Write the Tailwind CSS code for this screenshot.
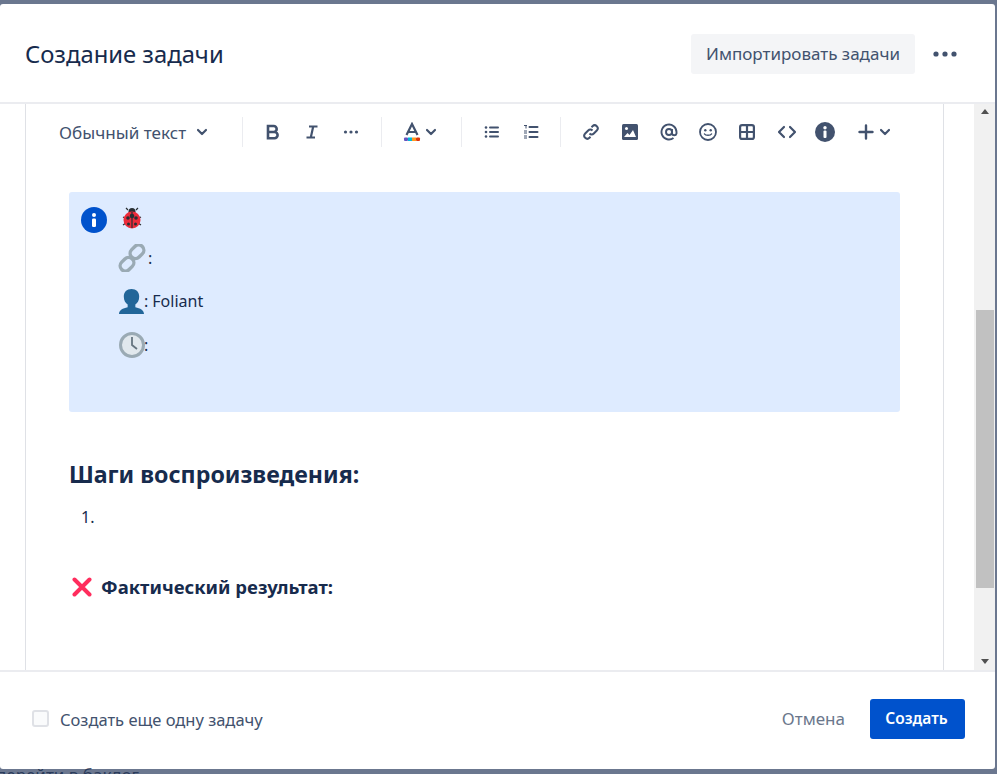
<!DOCTYPE html>
<html lang="ru">
<head>
  <meta charset="UTF-8"/>
  <meta name="viewport" content="width=device-width,initial-scale=1"/>
  <title>Создание задачи</title>
  <script src="https://cdn.jsdelivr.net/npm/@tailwindcss/browser@4"></script>
</head>
<body class="h-[774px] w-[997px] overflow-hidden bg-[#6b778f] font-['Noto_Sans','Open_Sans',sans-serif] text-[#172b4d]">

  <!-- Modal -->
  <div class="mt-[4px] flex h-[765px] w-[995px] flex-col overflow-hidden rounded-[3px] bg-white">

    <!-- Header -->
    <header class="flex h-[100px] shrink-0 items-center justify-between border-b-2 border-[#ebecf0] pl-[25px] pr-[37px] pt-[2px]">
      <h1 class="mt-[2px] text-[23.8px] font-normal leading-none">Создание задачи</h1>
      <div class="flex items-center gap-[17px]">
        <button class="flex h-[40px] w-[224px] items-center justify-center rounded-[3px] bg-[#f4f5f7] text-[17px] text-[#42526e]">Импортировать задачи</button>
        <svg width="26" height="8" viewBox="0 0 26 8" fill="#42526e"><circle cx="4" cy="4" r="2.6"/><circle cx="13" cy="4" r="2.6"/><circle cx="22" cy="4" r="2.6"/></svg>
      </div>
    </header>

    <!-- Body -->
    <div class="flex min-h-0 flex-1">
      <div class="ml-[25px] w-[919px] shrink-0 overflow-hidden border-x border-[#dfe1e6]">

        <!-- Toolbar -->
        <div class="flex h-[56px] items-center text-[#42526e]">
          <div class="flex w-[216px] items-center pl-[33px] text-[17.1px]">
            <span class="mt-[1px]">Обычный текст</span>
            <svg class="ml-[9px]" width="14" height="14" viewBox="0 0 14 14" fill="none" stroke="#42526e" stroke-width="2.2" stroke-linecap="round" stroke-linejoin="round"><path d="M3 5l4 4 4-4"/></svg>
          </div>
          <div class="h-[30px] w-px bg-[#ebecf0]"></div>
          <div class="flex w-[138px] justify-center">
            <div class="flex h-[24px] w-[39px] items-center justify-center">
              <svg width="16" height="16" viewBox="0 0 16 16" fill="none" stroke="#42526e" stroke-width="2.6"><path d="M3 2h5.700a3 3 0 0 1 0 6H3M3 8h6.500a3 3 0 0 1 0 6.200H3zM3 .8v14.500"/></svg>
            </div>
            <div class="flex h-[24px] w-[39px] items-center justify-center">
              <svg width="16" height="16" viewBox="0 0 16 16" fill="none" stroke="#42526e" stroke-width="2.200"><path d="M5 2.500h8.500M2.500 13.500H11M9.200 2.500L6.800 13.500"/></svg>
            </div>
            <div class="flex h-[24px] w-[39px] items-center justify-center">
              <svg width="16" height="6" viewBox="0 0 16 6" fill="#42526e"><circle cx="2.500" cy="3" r="1.600"/><circle cx="8" cy="3" r="1.600"/><circle cx="13.500" cy="3" r="1.600"/></svg>
            </div>
          </div>
          <div class="h-[30px] w-px bg-[#ebecf0]"></div>
          <div class="flex w-[79px] items-center pl-[21px]">
            <svg width="18" height="20" viewBox="0 0 18 20"><path d="M3.500 13L9 2l5.500 11M5.500 10h7" fill="none" stroke="#42526e" stroke-width="2.200"/><rect x="1" y="15.500" width="4" height="3.500" rx="1" fill="#6554c0"/><rect x="5" y="15.500" width="4" height="3.500" fill="#00b8d9"/><rect x="9" y="15.500" width="4" height="3.500" fill="#ff991f"/><rect x="13" y="15.500" width="4" height="3.500" rx="1" fill="#de350b"/></svg>
            <svg class="ml-[3px]" width="14" height="14" viewBox="0 0 14 14" fill="none" stroke="#42526e" stroke-width="2.200" stroke-linecap="round" stroke-linejoin="round"><path d="M3 5l4 4 4-4"/></svg>
          </div>
          <div class="h-[30px] w-px bg-[#ebecf0]"></div>
          <div class="flex w-[98px] items-center pl-[10px]">
            <div class="flex h-[24px] w-[39px] items-center justify-center">
              <svg width="16" height="14" viewBox="0 0 16 14" fill="#42526e"><circle cx="2" cy="2.500" r="1.300"/><circle cx="2" cy="7" r="1.300"/><circle cx="2" cy="11.500" r="1.300"/><rect x="5" y="1.500" width="10" height="2" rx="1"/><rect x="5" y="6" width="10" height="2" rx="1"/><rect x="5" y="10.500" width="10" height="2" rx="1"/></svg>
            </div>
            <div class="flex h-[24px] w-[39px] items-center justify-center">
              <svg width="16" height="16" viewBox="0 0 16 16" fill="#42526e"><rect x="1" y="1" width="3" height="1" /><rect x="2.500" y="1" width="1" height="3.500"/><rect x="1" y="6.500" width="3" height="1"/><rect x="1" y="8.500" width="3" height="1"/><rect x="1" y="11.500" width="3" height="1"/><rect x="1" y="13.500" width="3" height="1"/><rect x="5.500" y="2" width="10" height="2" rx="1"/><rect x="5.500" y="7" width="10" height="2" rx="1"/><rect x="5.500" y="12" width="10" height="2" rx="1"/></svg>
            </div>
          </div>
          <div class="h-[30px] w-px bg-[#ebecf0]"></div>
          <div class="flex items-center pl-[10px]">
            <div class="flex h-[24px] w-[39px] items-center justify-center">
              <svg width="18" height="18" viewBox="0 0 18 18" fill="none" stroke="#42526e" stroke-width="2"><path d="M7.500 10.500a3 3 0 0 0 4.300 0l3-3a3 3 0 0 0-4.300-4.300l-1 1"/><path d="M10.500 7.500a3 3 0 0 0-4.300 0l-3 3a3 3 0 0 0 4.300 4.300l1-1"/></svg>
            </div>
            <div class="flex h-[24px] w-[39px] items-center justify-center">
              <svg width="16" height="16" viewBox="0 0 16 16"><rect width="16" height="16" rx="1.500" fill="#42526e"/><circle cx="4.500" cy="4.500" r="1.500" fill="#fff"/><path d="M2 13l3.500-4 2 2 3.500-5 3 7z" fill="#fff"/></svg>
            </div>
            <div class="flex h-[24px] w-[39px] items-center justify-center">
              <svg width="18" height="18" viewBox="0 0 18 18" fill="none" stroke="#42526e" stroke-width="1.900"><circle cx="9" cy="9" r="3"/><path d="M12 6v4.500a2.300 2.300 0 0 0 4.500 0V9a7.500 7.500 0 1 0-3 6"/></svg>
            </div>
            <div class="flex h-[24px] w-[39px] items-center justify-center">
              <svg width="18" height="18" viewBox="0 0 18 18"><circle cx="9" cy="9" r="8" fill="none" stroke="#42526e" stroke-width="1.800"/><circle cx="6.300" cy="7.300" r="1.200" fill="#42526e"/><circle cx="11.700" cy="7.300" r="1.200" fill="#42526e"/><path d="M5.500 11c1 1.800 6 1.800 7 0" fill="none" stroke="#42526e" stroke-width="1.500" stroke-linecap="round"/></svg>
            </div>
            <div class="flex h-[24px] w-[39px] items-center justify-center">
              <svg width="16" height="16" viewBox="0 0 16 16" fill="none" stroke="#42526e" stroke-width="2.200"><rect x="1.100" y="1.100" width="13.800" height="13.800" rx="2"/><path d="M8 1v14M1 8h14"/></svg>
            </div>
            <div class="flex h-[24px] w-[39px] items-center justify-center pl-[2px]">
              <svg width="20" height="14" viewBox="0 0 20 14" fill="none" stroke="#42526e" stroke-width="2.200" stroke-linecap="round" stroke-linejoin="round"><path d="M7 2L2 7l5 5M13 2l5 5-5 5"/></svg>
            </div>
            <div class="flex h-[24px] w-[39px] items-center justify-center">
              <svg width="20" height="20" viewBox="0 0 20 20"><circle cx="10" cy="10" r="10" fill="#42526e"/><circle cx="10" cy="5.700" r="1.700" fill="#fff"/><rect x="8.500" y="8.500" width="3" height="7.500" rx="1" fill="#fff"/></svg>
            </div>
            <div class="flex h-[24px] w-[50px] items-center pl-[14px]">
              <svg class="shrink-0" width="16" height="16" viewBox="0 0 16 16" fill="none" stroke="#42526e" stroke-width="2.400" stroke-linecap="round"><path d="M8 1.500v13M1.500 8h13"/></svg>
              <svg class="ml-[4px] shrink-0" width="14" height="14" viewBox="0 0 14 14" fill="none" stroke="#42526e" stroke-width="2.200" stroke-linecap="round" stroke-linejoin="round"><path d="M3 5l4 4 4-4"/></svg>
            </div>
          </div>
        </div>

        <!-- Editor -->
        <div class="pl-[43px] pt-[32px]">

          <!-- Info panel -->
          <div class="flex h-[220px] w-[831px] rounded-[3px] bg-[#deebff] pl-[12px] pt-[15px]">
            <svg class="shrink-0" width="26" height="26" viewBox="0 0 26 26"><circle cx="13" cy="13" r="13" fill="#0052cc"/><circle cx="13" cy="8" r="2" fill="#fff"/><rect x="11" y="11.500" width="4" height="8.500" rx="1.200" fill="#fff"/></svg>
            <div class="ml-[11px] text-[16px] leading-none">
              <div class="flex h-[26px] items-start pl-[4px]">
                <svg width="20" height="22" viewBox="0 0 20 22"><path d="M6 3L4 1M14 3l2-2M1 10l2 1M19 10l-2 1M1 18l3-2M19 18l-3-2" stroke="#292f33" stroke-width="1.200"/><circle cx="10" cy="4.500" r="3.500" fill="#292f33"/><circle cx="10" cy="13" r="8.500" fill="#ec2b3a"/><path d="M10 5v16" stroke="#292f33" stroke-width="1.200"/><circle cx="6" cy="11" r="1.800" fill="#292f33"/><circle cx="14" cy="11" r="1.800" fill="#292f33"/><circle cx="10" cy="9" r="2.300" fill="#292f33"/><circle cx="6.500" cy="17" r="1.500" fill="#292f33"/><circle cx="13.500" cy="17" r="1.500" fill="#292f33"/></svg>
              </div>
              <div class="mt-[11px] flex h-[28px] items-center">
                <svg width="28" height="28" viewBox="0 0 28 28" fill="none" stroke="#9aaab4" stroke-width="3.400"><rect x="11.500" y="2.500" width="15" height="10.500" rx="5.250" transform="rotate(-45 19 7.750)"/><rect x="1.500" y="15" width="15" height="10.500" rx="5.250" transform="rotate(-45 9 20.250)"/></svg>
                <span class="ml-[2px]">:</span>
              </div>
              <div class="mt-[15px] flex h-[28px] items-center">
                <svg class="ml-[1px]" width="25" height="25" viewBox="0 0 26 26" fill="#269"><path d="M0 26c0-4 4-6 9-7v-3c-2-1-4-4-4-8 0-5 3-8 8-8s8 3 8 8c0 4-2 7-4 8v3c5 1 9 3 9 7z"/></svg>
                <span>:</span><span class="ml-[4px]">Foliant</span>
              </div>
              <div class="mt-[16px] flex h-[28px] items-center">
                <svg class="ml-[1px]" width="26" height="26" viewBox="0 0 26 26"><circle cx="13" cy="13" r="11.500" fill="#e1e8ed" stroke="#9aaab4" stroke-width="3"/><path d="M13 5v8l5 4" fill="none" stroke="#66757f" stroke-width="1.800"/></svg>
                <span class="-ml-[1px]">:</span>
              </div>
            </div>
          </div>

          <h2 class="mt-[48px] text-[23.2px] font-bold leading-[28px]">Шаги воспроизведения:</h2>
          <ol class="mt-[18px] pl-[12px] text-[16px] leading-[22px]"><li>1.</li></ol>
          <div class="ml-[3px] mt-[49px] flex items-center">
            <svg width="20" height="20" viewBox="0 0 20 20" fill="none" stroke="#ff2d5d" stroke-width="4" stroke-linecap="round"><path d="M2.500 2.500l15 15M17.500 2.500l-15 15"/></svg>
            <span class="ml-[9px] text-[18.5px] font-bold leading-[20px]">Фактический результат:</span>
          </div>
        </div>
      </div>

      <div class="w-[30px] shrink-0"></div>

      <!-- Scrollbar -->
      <div class="flex w-[21px] shrink-0 flex-col items-center justify-between bg-[#f1f1f1] py-[5px]">
        <div class="h-0 w-0 border-x-[4px] border-b-[5px] border-x-transparent border-b-[#505050]"></div>
        <div class="mt-[190px] h-[278px] w-[18px] bg-[#c1c1c1]"></div>
        <div class="mb-[1px] mt-[65px] h-0 w-0 border-x-[4px] border-t-[5px] border-x-transparent border-t-[#505050]"></div>
      </div>
    </div>

    <!-- Footer -->
    <footer class="flex h-[99px] shrink-0 items-center justify-between border-t-2 border-[#ebecf0] pb-[4px] pl-[32px] pr-[30px]">
      <label class="flex items-center text-[16.5px] text-[#42526e]">
        <span class="h-[17px] w-[17px] rounded-[3px] border-2 border-[#dfe1e6] bg-[#fafbfc]"></span>
        <span class="ml-[11px] mt-[3px]">Создать еще одну задачу</span>
      </label>
      <div class="flex items-center">
        <button class="mt-[1px] text-[17px] text-[#6b778c]">Отмена</button>
        <button class="ml-[25px] h-[40px] w-[95px] rounded-[3px] bg-[#0052cc] pr-[2px] text-[15.5px] font-semibold text-white">Создать</button>
      </div>
    </footer>
  </div>

  <!-- Text behind the modal -->
  <div class="-ml-[4px] -mt-[1px] whitespace-nowrap text-[17px] leading-[14px] text-[#172b4d]/80">перейти в баклог</div>
</body>
</html>
